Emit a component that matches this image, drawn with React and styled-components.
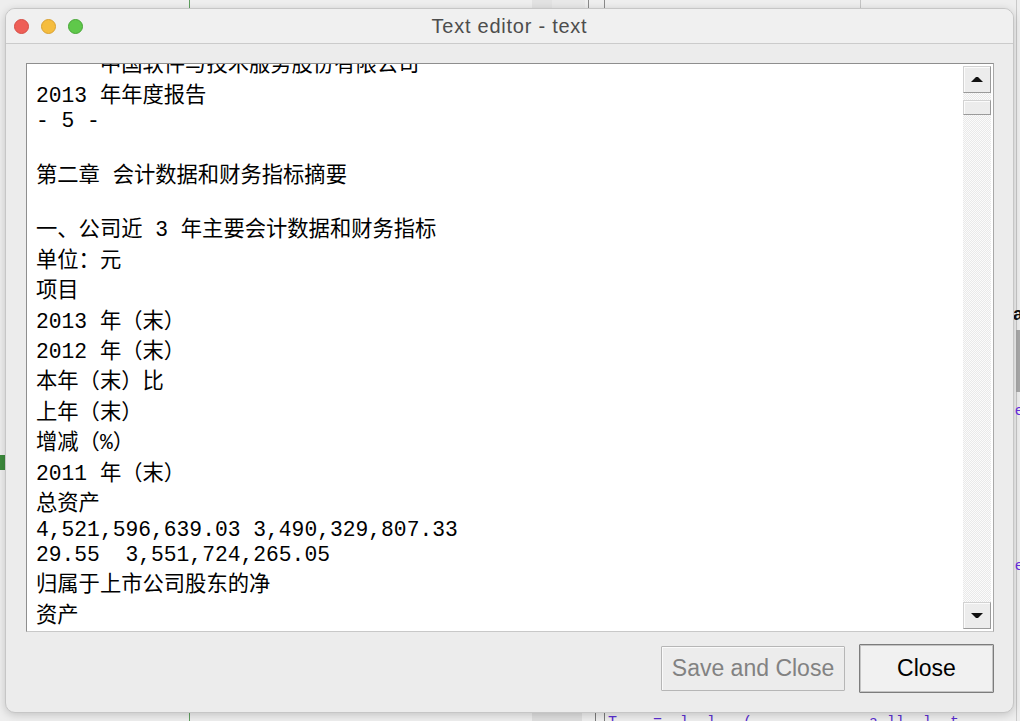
import React from 'react';
import styled, { createGlobalStyle } from 'styled-components';

const Global = createGlobalStyle`
  html, body { margin: 0; padding: 0; }
  body {
    width: 1020px; height: 721px; overflow: hidden;
    background: #ececec;
    font-family: "Liberation Sans", Arial, sans-serif;
  }
`;

const Desktop = styled.div`
  position: relative;
  width: 1020px;
  height: 721px;
  overflow: hidden;
  background: #eeeeee;
`;

/* ---------- backdrop (other app behind the dialog) ---------- */
const VLine = styled.div`
  position: absolute;
  left: ${p => p.$x}px;
  top: ${p => p.$top}px;
  width: ${p => p.$w || 1}px;
  height: ${p => p.$h}px;
  background: ${p => p.$c};
`;

const BackCode = styled.div`
  position: absolute;
  left: 608px;
  top: 713px;
  font-family: "Liberation Mono", monospace;
  font-size: 15px;
  line-height: 20px;
  color: #5a2fd0;
  white-space: pre;
`;

const SideGlyph = styled.div`
  position: absolute;
  left: ${p => p.$x}px;
  top: ${p => p.$y}px;
  font-family: "Liberation Sans", sans-serif;
  font-size: ${p => p.$s || 16}px;
  font-weight: ${p => (p.$bold ? 700 : 400)};
  color: ${p => p.$c};
  line-height: 1;
`;

/* ---------- window ---------- */
const Window = styled.div`
  position: absolute;
  left: 5px;
  top: 8px;
  width: 1009px;
  height: 705px;
  box-sizing: border-box;
  border: 1px solid #c6c6c6;
  border-radius: 10px;
  background: #ececec;
  box-shadow: 0 2px 8px rgba(0, 0, 0, 0.18);
  display: flex;
  flex-direction: column;
  overflow: hidden;
`;

const TitleBar = styled.div`
  flex: none;
  height: 34px;
  background: #f0f0f0;
  border-bottom: 1px solid #cbcbcb;
  display: grid;
  grid-template-columns: 1fr auto 1fr;
  align-items: center;
`;

const Lights = styled.div`
  display: flex;
  gap: 12px;
  padding-left: 8px;
`;

const Light = styled.span`
  width: 15px;
  height: 15px;
  border-radius: 50%;
  box-sizing: border-box;
  background: ${p => p.$fill};
  border: 0.5px solid ${p => p.$edge};
`;

const Title = styled.div`
  font-family: "Liberation Sans", Arial, sans-serif;
  font-size: 20px;
  letter-spacing: 0.75px;
  color: #4d4d4d;
`;

const Body = styled.div`
  flex: 1;
  display: flex;
  flex-direction: column;
  padding: 19px 19px 19px 20px;
  min-height: 0;
`;

const Frame = styled.div`
  flex: 1;
  min-height: 0;
  display: flex;
  background: #ffffff;
  border: 1px solid #8e8e8e;
  border-right-color: #a8a8a8;
  border-bottom-color: #c8c8c8;
`;

const Viewport = styled.div`
  flex: 1;
  overflow: hidden;
  padding-left: 9px;
  font-family: "Liberation Mono", "Noto Sans CJK SC", monospace;
  font-size: 21.3px;
  color: #000;
`;

const TextContent = styled.div`
  margin-top: -17.6px;
`;

const HEIGHTS = { cjk: 30.4, mono: 25.5, blank: 24.3 };

const Line = styled.div`
  box-sizing: border-box;
  height: ${p => HEIGHTS[p.$kind]}px;
  padding-top: ${p => (p.$kind === 'mono' ? 3 : 0)}px;
  display: flex;
  align-items: center;
  white-space: pre;
  line-height: normal;
`;

const ScrollBar = styled.div`
  flex: none;
  width: 28px;
  margin: 2px 2px 2px 0;
  display: flex;
  flex-direction: column;
`;

const Track = styled.div`
  flex: 1;
  padding-top: 7px;
  background: repeating-conic-gradient(#e9e9e9 0 25%, #fbfbfb 0 50%) 0 0 / 2px 2px;
`;

const Bevel = styled.div`
  flex: none;
  box-sizing: border-box;
  height: ${p => p.$h}px;
  background: #ececec;
  border-style: solid;
  border-width: 1px;
  border-color: #d2d2d2 #9a9a9a #9a9a9a #d2d2d2;
  box-shadow: inset 1px 1px 0 #fbfbfb;
  display: flex;
  align-items: center;
  justify-content: center;
`;

const ButtonRow = styled.div`
  flex: none;
  margin-top: 12px;
  display: flex;
  justify-content: flex-end;
  align-items: center;
  gap: 14px;
`;

const Button = styled.button`
  box-sizing: border-box;
  width: ${p => p.$w}px;
  height: ${p => (p.$primary ? 49 : 45)}px;
  padding: 0;
  font-family: "Liberation Sans", Arial, sans-serif;
  font-size: 23px;
  color: ${p => (p.$disabled ? '#828282' : '#000')};
  background: ${p => (p.$primary ? '#f1f1f1' : '#ececec')};
  border: 1px solid ${p => (p.$primary ? '#7c7c7c' : '#b6b6b6')};
  box-shadow: ${p => (p.$primary ? 'inset 0 0 0 1px #c4c4c4' : 'inset 1px 1px 0 #fafafa')};
  border-radius: 1px;
`;

const Arrow = ({ down }) => (
  <svg width="12" height="7" viewBox="0 0 12 7">
    <polygon
      points={down ? '0,1 12,1 7,6 5,6' : '5,1 7,1 12,6 0,6'}
      fill="#111"
    />
  </svg>
);

const LINES = [
  '     中国软件与技术服务股份有限公司',
  '2013 年年度报告',
  '- 5 -',
  '',
  '第二章 会计数据和财务指标摘要',
  '',
  '一、公司近 3 年主要会计数据和财务指标',
  '单位：元',
  '项目',
  '2013 年（末）',
  '2012 年（末）',
  '本年（末）比',
  '上年（末）',
  '增减（%）',
  '2011 年（末）',
  '总资产',
  '4,521,596,639.03 3,490,329,807.33',
  '29.55  3,551,724,265.05',
  '归属于上市公司股东的净',
  '资产',
  '',
];

const kindOf = s => (s === '' ? 'blank' : /[^\x00-\x7f]/.test(s) ? 'cjk' : 'mono');

export default function App() {
  return (
    <>
      <Global />
      <Desktop>
        <VLine $x={189} $top={0} $h={721} $c="#5f9e5f" />
        <VLine $x={532} $top={0} $h={8} $w={20} $c="#e2e2e2" />
        <VLine $x={552} $top={0} $h={8} $w={33} $c="#e8e8e8" />
        <VLine $x={588} $top={0} $h={8} $c="#8a8a8a" />
        <VLine $x={604} $top={0} $h={8} $c="#8a8a8a" />
        <VLine $x={860} $top={0} $h={8} $c="#c4c4c4" />
        <VLine $x={532} $top={713} $h={8} $w={50} $c="#dedede" />
        <VLine $x={595} $top={713} $h={8} $c="#7a7a7a" />
        <VLine $x={604} $top={713} $h={8} $c="#7a7a7a" />
        <VLine $x={1016} $top={0} $h={721} $c="#c9c9c9" />
        <VLine $x={1016} $top={330} $h={62} $w={4} $c="#a8a8a8" />
        <VLine $x={0} $top={455} $h={15} $w={5} $c="#3c8a3c" />
        <SideGlyph $x={1013} $y={305} $s={18} $bold $c="#111">a</SideGlyph>
        <SideGlyph $x={1015} $y={402} $s={15} $c="#6a2ee0">e</SideGlyph>
        <SideGlyph $x={1015} $y={557} $s={15} $c="#6a2ee0">e</SideGlyph>
        <BackCode>{'T    =  l  l   (    ,     ,  a ll  l  t'}</BackCode>

        <Window>
          <TitleBar>
            <Lights>
              <Light $fill="#ee5f57" $edge="#d64d45" />
              <Light $fill="#f5bd3f" $edge="#d9a131" />
              <Light $fill="#5fc84a" $edge="#47a636" />
            </Lights>
            <Title>Text editor - text</Title>
            <div />
          </TitleBar>
          <Body>
            <Frame>
              <Viewport>
                <TextContent>
                  {LINES.map((s, i) => (
                    <Line key={i} $kind={kindOf(s)}>{s}</Line>
                  ))}
                </TextContent>
              </Viewport>
              <ScrollBar>
                <Bevel $h={27}><Arrow /></Bevel>
                <Track>
                  <Bevel $h={15} />
                </Track>
                <Bevel $h={27}><Arrow down /></Bevel>
              </ScrollBar>
            </Frame>
            <ButtonRow>
              <Button $w={184} $disabled>Save and Close</Button>
              <Button $w={135} $primary>Close</Button>
            </ButtonRow>
          </Body>
        </Window>
      </Desktop>
    </>
  );
}
